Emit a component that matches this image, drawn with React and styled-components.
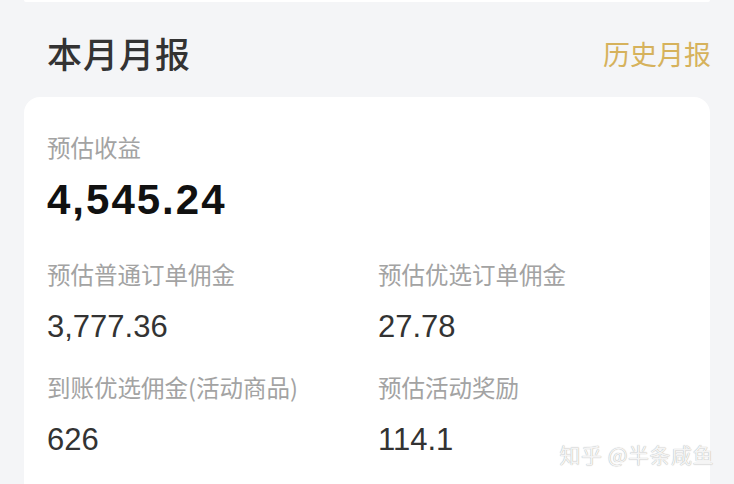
import React from "react";
import styled, { createGlobalStyle } from "styled-components";

const GlobalStyle = createGlobalStyle`
  html, body {
    margin: 0;
    padding: 0;
    background: #f4f5f7;
    height: 484px;
    overflow: hidden;
  }
  body {
    font-family: "Noto Sans CJK SC", "Noto Sans", sans-serif;
  }
`;

const Page = styled.div`
  position: relative;
  display: flex;
  flex-direction: column;
  padding: 0 24px;
  height: 484px;
  box-sizing: border-box;
  overflow: hidden;
`;

const PrevCard = styled.div`
  height: 2px;
  background: #fff;
  border-radius: 0 0 16px 16px;
`;

const Header = styled.div`
  display: flex;
  align-items: center;
  justify-content: space-between;
  height: 95px;
  padding: 6px 0 0 23px;
  box-sizing: border-box;
`;

const Title = styled.h2`
  margin: 0;
  font-size: 35px;
  font-weight: 500;
  color: #333;
  letter-spacing: 1px;
`;

const HistoryLink = styled.a`
  font-size: 27px;
  color: #d6b25c;
  margin-right: -1px;
  margin-top: 2px;
`;

const Card = styled.section`
  flex: 1;
  background: #fff;
  border-radius: 16px 16px 0 0;
  padding: 34px 23px 0;
`;

const Label = styled.div`
  font-size: 23.5px;
  line-height: 32px;
  color: #a3a3a3;
`;

const Total = styled.div`
  margin-top: 13px;
  font-family: "Liberation Sans", Arial, sans-serif;
  font-size: 42px;
  line-height: 48px;
  font-weight: 700;
  letter-spacing: 2px;
  color: #111;
`;

const Grid = styled.div`
  display: grid;
  grid-template-columns: 331px 1fr;
  row-gap: 24px;
  margin-top: 34px;
`;

const Stat = styled.div`
  display: flex;
  flex-direction: column;
  gap: 17px;
`;

const Value = styled.div`
  font-family: "Liberation Sans", Arial, sans-serif;
  font-size: 31px;
  line-height: 40px;
  color: #333;
`;

const Watermark = styled.div`
  position: absolute;
  right: 20px;
  bottom: 16px;
  font-size: 21px;
  line-height: 28px;
  color: #f4f4f4;
  text-shadow: 0 0 1px #9a9a9a;
  letter-spacing: 0.5px;
`;

const stats = [
  { label: "预估普通订单佣金", value: "3,777.36" },
  { label: "预估优选订单佣金", value: "27.78" },
  { label: "到账优选佣金(活动商品)", value: "626" },
  { label: "预估活动奖励", value: "114.1" },
];

export default function App() {
  return (
    <Page>
      <GlobalStyle />
      <PrevCard />
      <Header>
        <Title>本月月报</Title>
        <HistoryLink>历史月报</HistoryLink>
      </Header>
      <Card>
        <Label>预估收益</Label>
        <Total>4,545.24</Total>
        <Grid>
          {stats.map((s) => (
            <Stat key={s.label}>
              <Label>{s.label}</Label>
              <Value>{s.value}</Value>
            </Stat>
          ))}
        </Grid>
      </Card>
      <Watermark>知乎 @半条咸鱼</Watermark>
    </Page>
  );
}
